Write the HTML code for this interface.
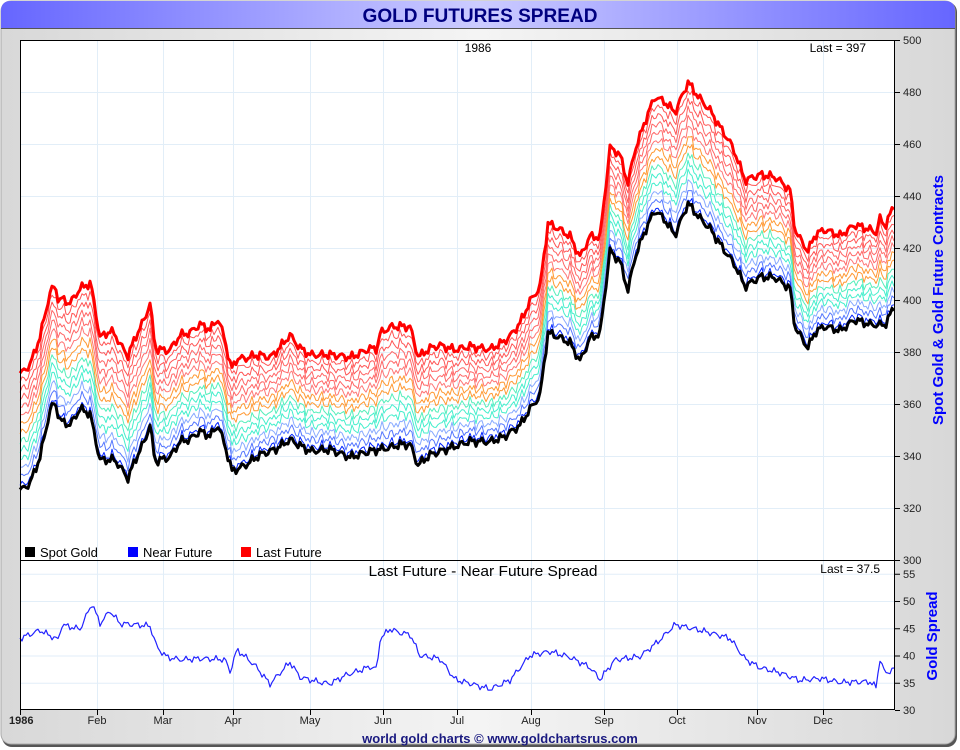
<!DOCTYPE html>
<html><head><meta charset="utf-8"><style>
html,body{margin:0;padding:0;width:960px;height:750px;overflow:hidden;background:#fff;font-family:"Liberation Sans",sans-serif}
</style></head><body>
<svg id="s" width="960" height="750" xmlns="http://www.w3.org/2000/svg" font-family="Liberation Sans, sans-serif">
<defs>
<linearGradient id="tg" x1="0" x2="1"><stop offset="0" stop-color="#6666ff"/><stop offset="0.5" stop-color="#ccccff"/><stop offset="1" stop-color="#6666ff"/></linearGradient>
<linearGradient id="bg" x1="0" x2="1"><stop offset="0" stop-color="#d8d8d8"/><stop offset="0.5" stop-color="#f4f4f4"/><stop offset="1" stop-color="#d8d8d8"/></linearGradient>
</defs>
<rect x="2" y="2" width="955" height="745" rx="10" fill="#555"/>
<rect x="1" y="1" width="954" height="743" rx="10" fill="url(#bg)" stroke="#aaa"/>
<path d="M1,28 L1,11 Q1,1 11,1 L945,1 Q955,1 955,11 L955,28 Z" fill="url(#tg)"/>
<line x1="1" y1="28.5" x2="955" y2="28.5" stroke="#555"/>
<text x="480" y="22" text-anchor="middle" font-size="19" font-weight="bold" fill="#000080" textLength="235" lengthAdjust="spacingAndGlyphs">GOLD FUTURES SPREAD</text>
<rect x="20" y="40" width="875" height="670" fill="#fff"/>
<g id="grid" stroke="#e2eef8" stroke-width="1"></g>
<g id="lines" fill="none" stroke-linejoin="round"></g>
<rect x="20.5" y="40.5" width="874" height="669" fill="none" stroke="#000"/>
<line x1="20" y1="560.5" x2="895" y2="560.5" stroke="#000"/>
<g id="ax" font-size="11" fill="#222"></g>
<text x="478" y="52" text-anchor="middle" font-size="12">1986</text>
<text x="866" y="52" text-anchor="end" font-size="12">Last = 397</text>
<text x="483" y="576" text-anchor="middle" font-size="15" textLength="229" lengthAdjust="spacingAndGlyphs">Last Future - Near Future Spread</text>
<text x="880" y="573" text-anchor="end" font-size="12">Last = 37.5</text>
<rect x="25" y="547" width="10" height="10" fill="#000"/><text x="40" y="557" font-size="13">Spot Gold</text>
<rect x="128" y="547" width="10" height="10" fill="#0000ff"/><text x="143" y="557" font-size="13">Near Future</text>
<rect x="241" y="547" width="10" height="10" fill="#ff0000"/><text x="256" y="557" font-size="13">Last Future</text>
<text transform="translate(943,300) rotate(-90)" text-anchor="middle" font-size="15" font-weight="bold" fill="#0000ff">Spot Gold &amp; Gold Future Contracts</text>
<text transform="translate(937,636) rotate(-90)" text-anchor="middle" font-size="15" font-weight="bold" fill="#0000ff">Gold Spread</text>
<text x="500" y="743" text-anchor="middle" font-size="13" font-weight="bold" fill="#1a1a80">world gold charts © www.goldchartsrus.com</text>
</svg>
<script>
var NS="http://www.w3.org/2000/svg";
function el(p,t,a,txt){var e=document.createElementNS(NS,t);for(var k in a)e.setAttribute(k,a[k]);if(txt!=null)e.textContent=txt;document.getElementById(p).appendChild(e);return e;}
var months=[[20,"1986"],[97,"Feb"],[163,"Mar"],[233,"Apr"],[310,"May"],[383,"Jun"],[457,"Jul"],[531,"Aug"],[604,"Sep"],[677,"Oct"],[757,"Nov"],[823,"Dec"]];
months.forEach(function(m,i){
 if(i>0){el("grid","line",{x1:m[0]+.5,y1:40,x2:m[0]+.5,y2:710});}
 el("ax","line",{x1:m[0]+.5,y1:710,x2:m[0]+.5,y2:715,stroke:"#000"});
 var t=el("ax","text",{x:m[0],y:724,"text-anchor":"middle"},m[1]); if(i==0){t.setAttribute("font-weight","bold");t.setAttribute("x",9);t.setAttribute("text-anchor","start");}
});
function py(p){return 560-(p-300)*2.6;}
function sy(v){return 710-(v-30)*5.45;}
for(var p=300;p<=500;p+=20){var y=py(p);if(p>300&&p<500)el("grid","line",{x1:20,y1:y+.5,x2:895,y2:y+.5});
 el("ax","line",{x1:895,y1:y+.5,x2:900,y2:y+.5,stroke:"#000"});el("ax","text",{x:903,y:y+4},p);}
for(var v=30;v<=55;v+=5){var y=sy(v);if(v>30)el("grid","line",{x1:20,y1:y+.5,x2:895,y2:y+.5});
 el("ax","line",{x1:895,y1:y+.5,x2:900,y2:y+.5,stroke:"#000"});el("ax","text",{x:903,y:y+4},v);}
var spot=[[20,327],[30,330],[40,340],[50,358],[55,361],[60,354],[70,352],[80,358],[90,356],[100,338],[115,338],[128,331],[135,338],[145,346],[150,352],[155,338],[170,340],[180,346],[190,347],[200,350],[210,348],[218,352],[225,344],[232,334],[245,336],[260,340],[275,342],[290,346],[310,342],[330,343],[350,340],[370,342],[390,343],[400,344],[410,344],[418,336],[430,340],[450,343],[470,346],[490,346],[505,348],[520,352],[530,358],[540,363],[548,387],[560,385],[570,383],[580,376],[590,385],[600,387],[610,419],[620,415],[628,404],[635,417],[645,427],[655,435],[665,431],[675,425],[688,437],[700,431],[710,427],[720,421],[735,413],[745,405],[760,409],[775,409],[790,405],[795,390],[808,382],[815,388],[825,390],[840,388],[855,392],[870,390],[885,390],[894,397]];
var spr=[[20,43.3],[40,44.8],[58,43],[62,45.7],[80,44.8],[92,49.4],[100,45.7],[110,48],[120,45.7],[150,45.4],[157,41.5],[167,39.8],[180,39.4],[200,39.6],[225,39.3],[230,37],[237,41],[255,38],[270,34.6],[290,38.7],[300,36],[320,35.2],[330,35],[345,36.5],[370,38],[377,37.5],[380,43],[390,44.8],[400,44],[410,43.7],[420,39.8],[440,39.3],[455,35.6],[470,35],[490,34],[510,35.6],[530,40],[550,40.6],[570,39.5],[590,37.7],[600,35.6],[615,39.3],[640,40],[660,43],[675,45.7],[700,44.5],[730,43],[745,39.3],[760,37.8],[780,37],[800,35.6],[820,35.9],[840,35],[870,35],[876,34],[880,39.3],[885,36.5],[894,37.5]];
function interp(a,x){for(var i=1;i<a.length;i++){if(x<=a[i][0]){var t=(x-a[i-1][0])/(a[i][0]-a[i-1][0]);return a[i-1][1]+t*(a[i][1]-a[i-1][1]);}}return a[a.length-1][1];}
function nz(x,k){return Math.sin(x*1.7+k)*0.8+Math.sin(x*0.63+k*2)*1.1+Math.sin(x*3.1)*0.5;}
var cols=["#0022ff","#5577ff","#88aaff","#44eecc","#44eecc","#55eebb","#ff9933","#ff9933","#ff7777","#ff6666","#ff6666","#ff5555","#ff5555"];
var N=cols.length+1;
function path(f){var d="";for(var x=20;x<=894;x+=2){d+=(x==20?"M":"L")+x+","+f(x).toFixed(1);}return d;}
for(var j=N-1;j>=1;j--){(function(j){
 var c=j<=cols.length?cols[j-1]:"#ff0000";
 el("lines","path",{d:path(function(x){var s=interp(spot,x)+nz(x,0);var sp=interp(spr,x);var near=s+1.5;return py(near+(sp*(j-1)/(N-1))+Math.sin(x*0.9+j)*0.8);}),stroke:c,"stroke-width":1});
})(j);}
el("lines","path",{d:path(function(x){var s=interp(spot,x)+nz(x,0);return py(s+1.5+interp(spr,x));}),stroke:"#ff0000","stroke-width":3});
el("lines","path",{d:path(function(x){return py(interp(spot,x)+nz(x,0));}),stroke:"#000","stroke-width":3});
el("lines","path",{d:path(function(x){return sy(interp(spr,x)+nz(x,5)*0.35);}),stroke:"#2222ff","stroke-width":1.2});
</script>
</body></html>
